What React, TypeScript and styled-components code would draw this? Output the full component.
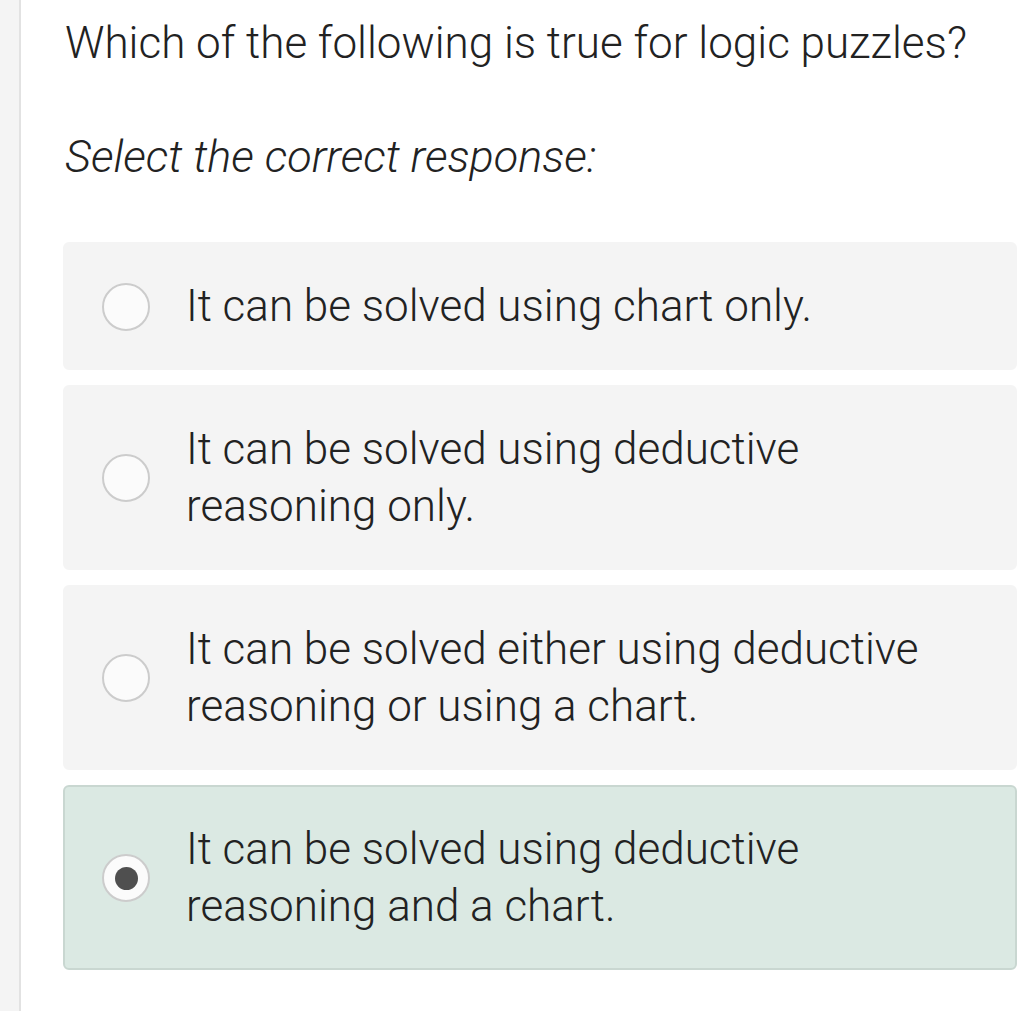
import styled, { createGlobalStyle } from "styled-components";

const GlobalStyle = createGlobalStyle`
  html, body {
    margin: 0;
    padding: 0;
    background: #ffffff;
  }
  body {
    font-family: Roboto, "Liberation Sans", sans-serif;
    color: #222222;
  }
`;

const Page = styled.div`
  display: flex;
  min-height: 1011px;
`;

const SideStrip = styled.div`
  width: 19px;
  flex-shrink: 0;
  background: #f4f4f4;
  border-right: 2px solid #e2e2e2;
`;

const Content = styled.div`
  flex: 1;
  padding: 14px 11px 0 42px;
`;

const Question = styled.h1`
  margin: 0 0 0 2px;
  font-size: 44px;
  font-weight: 300;
  line-height: 58px;
  color: #222222;
`;

const Prompt = styled.p`
  margin: 56px 0 0 2px;
  font-size: 45px;
  font-weight: 300;
  font-style: italic;
  line-height: 58px;
  color: #222222;
`;

const Options = styled.div`
  display: flex;
  flex-direction: column;
  gap: 15px;
  margin-top: 56px;
`;

const Option = styled.label<{ $selected?: boolean }>`
  display: flex;
  align-items: center;
  gap: 36px;
  padding: 34px 20px 33px 37px;
  border-radius: 6px;
  background: ${(p) => (p.$selected ? "#dbe9e3" : "#f4f4f4")};
  border: 2px solid ${(p) => (p.$selected ? "#c9d7d1" : "#f4f4f4")};
  cursor: pointer;
`;

const Radio = styled.span<{ $checked?: boolean }>`
  width: 44px;
  height: 44px;
  flex-shrink: 0;
  border-radius: 50%;
  border: 2px solid #cccccc;
  background: #fbfbfb;
  display: flex;
  align-items: center;
  justify-content: center;

  &::after {
    content: "";
    width: 23px;
    height: 23px;
    border-radius: 50%;
    background: #4f4f4f;
    display: ${(p) => (p.$checked ? "block" : "none")};
  }
`;

const OptionText = styled.span`
  font-size: 44px;
  font-weight: 300;
  line-height: 57px;
  color: #222222;
  max-width: 760px;
`;

const choices = [
  "It can be solved using chart only.",
  "It can be solved using deductive reasoning only.",
  "It can be solved either using deductive reasoning or using a chart.",
  "It can be solved using deductive reasoning and a chart.",
];

export default function App() {
  const selected = 3;
  return (
    <>
      <GlobalStyle />
      <Page>
        <SideStrip />
        <Content>
          <Question>Which of the following is true for logic puzzles?</Question>
          <Prompt>Select the correct response:</Prompt>
          <Options>
            {choices.map((c, i) => (
              <Option key={c} $selected={i === selected}>
                <Radio $checked={i === selected} />
                <OptionText>{c}</OptionText>
              </Option>
            ))}
          </Options>
        </Content>
      </Page>
    </>
  );
}
